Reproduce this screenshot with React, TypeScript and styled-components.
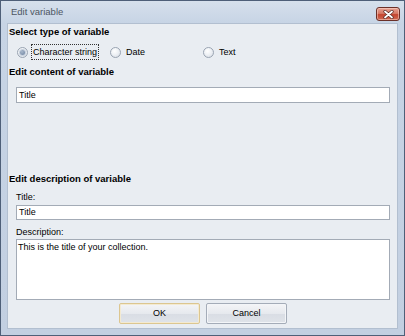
import React from "react";
import styled, { createGlobalStyle } from "styled-components";

const Global = createGlobalStyle`
  html, body { margin: 0; padding: 0; background: #ffffff; }
  body {
    width: 405px; height: 336px; overflow: hidden;
    font-family: "Liberation Sans", Arial, sans-serif;
  }
  * { box-sizing: border-box; }
`;

const Window = styled.div`
  width: 405px;
  height: 336px;
  border: 1px solid #4e5f78;
  background: linear-gradient(180deg, #d6e0ec 0px, #c7d4e5 22px, #c2cfe1 100%);
  display: flex;
  flex-direction: column;
  padding: 0 6px 6px 6px;
`;

const TitleBar = styled.div`
  height: 22px;
  display: flex;
  align-items: flex-start;
  justify-content: space-between;
  padding-left: 4px;
`;

const TitleText = styled.span`
  font-family: "Liberation Sans", Arial, sans-serif;
  font-size: 9.5px;
  line-height: 22px;
  color: #4d5663;
`;

const CloseButton = styled.div`
  width: 24px;
  height: 14px;
  margin-top: 6px;
  margin-right: -2px;
  border: 1px solid #6b3028;
  border-radius: 3px;
  background: linear-gradient(180deg, #e6a294 0%, #d77a66 45%, #c4452f 55%, #cf6a52 100%);
  display: flex;
  align-items: center;
  justify-content: center;
  box-shadow: inset 0 0 0 1px rgba(255, 220, 210, 0.5);
`;

const Client = styled.div`
  flex: 1;
  background: #e9edf2;
  border: 1px solid #b2bfd0;
  display: flex;
  flex-direction: column;
`;

const Heading = styled.div<{ $top: number }>`
  font-size: 9.5px;
  font-weight: bold;
  line-height: 14px;
  height: 14px;
  color: #000;
  padding-left: 1px;
  margin-top: ${(p) => p.$top}px;
`;

const RadioRow = styled.div`
  display: grid;
  grid-template-columns: repeat(3, 93px);
  margin: 5px 0 0 9px;
  height: 16px;
`;

const RadioOption = styled.label`
  display: flex;
  align-items: center;
  gap: 3px;
`;

const RadioCircle = styled.span<{ $checked?: boolean }>`
  width: 11px;
  height: 11px;
  border-radius: 50%;
  border: 1px solid #9aa4b2;
  background: radial-gradient(circle at 40% 35%, #ffffff 0%, #eef1f5 45%, #d3d9e2 100%);
  display: flex;
  align-items: center;
  justify-content: center;
  &::after {
    content: "";
    display: ${(p) => (p.$checked ? "block" : "none")};
    width: 5px;
    height: 5px;
    border-radius: 50%;
    background: radial-gradient(circle at 40% 35%, #a9b8cc 0%, #6a7f9c 100%);
    box-shadow: 0 0 0 1px #c6d0dd;
  }
`;

const RadioLabel = styled.span<{ $focused?: boolean }>`
  font-size: 9px;
  line-height: 14px;
  color: #000;
  padding: 0 1px;
  border: 1px dotted ${(p) => (p.$focused ? "#333" : "transparent")};
`;

const SubLabel = styled.div<{ $top: number }>`
  font-size: 9px;
  line-height: 13px;
  height: 13px;
  color: #000;
  padding-left: 8px;
  margin-top: ${(p) => p.$top}px;
`;

const TextInput = styled.div<{ $top: number; $h: number }>`
  margin: ${(p) => p.$top}px 7px 0 8px;
  height: ${(p) => p.$h}px;
  border: 1px solid #a3abb6;
  background: #ffffff;
  font-size: 9px;
  line-height: ${(p) => p.$h - 2}px;
  padding-left: 2px;
  color: #000;
`;

const TextArea = styled.div`
  margin: 0 7px 0 8px;
  height: 61px;
  border: 1px solid #a3abb6;
  background: #ffffff;
  font-size: 9px;
  line-height: 13px;
  padding: 1px 0 0 1px;
  color: #000;
`;

const ButtonRow = styled.div`
  display: flex;
  justify-content: center;
  gap: 6px;
  margin-top: 3px;
  padding-left: 1px;
`;

const Button = styled.div<{ $default?: boolean }>`
  width: 81px;
  height: 21px;
  border: 1px solid ${(p) => (p.$default ? "#dcc690" : "#a4acb8")};
  border-radius: 2px;
  background: linear-gradient(180deg, #f4f5f7 0%, #e6e9ee 50%, #d9dde4 51%, #dfe3e9 100%);
  box-shadow: inset 0 0 0 1px ${(p) => (p.$default ? "#f3ead2" : "#f3f5f8")};
  font-size: 9px;
  line-height: 19px;
  text-align: center;
  color: #000;
`;

export default function App() {
  return (
    <>
      <Global />
      <Window>
        <TitleBar>
          <TitleText>Edit variable</TitleText>
          <CloseButton>
            <svg width="11" height="9" viewBox="0 0 11 9">
              <path d="M2 1.5 L9 7.5 M9 1.5 L2 7.5" stroke="#5a2a24" strokeWidth="3.2" strokeLinecap="round" />
              <path d="M2 1.5 L9 7.5 M9 1.5 L2 7.5" stroke="#ffffff" strokeWidth="1.8" strokeLinecap="round" />
            </svg>
          </CloseButton>
        </TitleBar>
        <Client>
          <Heading $top={1}>Select type of variable</Heading>
          <RadioRow>
            <RadioOption>
              <RadioCircle $checked />
              <RadioLabel $focused>Character string</RadioLabel>
            </RadioOption>
            <RadioOption>
              <RadioCircle />
              <RadioLabel>Date</RadioLabel>
            </RadioOption>
            <RadioOption>
              <RadioCircle />
              <RadioLabel>Text</RadioLabel>
            </RadioOption>
          </RadioRow>
          <Heading $top={5}>Edit content of variable</Heading>
          <TextInput $top={8} $h={16}>Title</TextInput>
          <Heading $top={69}>Edit description of variable</Heading>
          <SubLabel $top={5}>Title:</SubLabel>
          <TextInput $top={1} $h={15}>Title</TextInput>
          <SubLabel $top={6}>Description:</SubLabel>
          <TextArea>This is the title of your collection.</TextArea>
          <ButtonRow>
            <Button $default>OK</Button>
            <Button>Cancel</Button>
          </ButtonRow>
        </Client>
      </Window>
    </>
  );
}
